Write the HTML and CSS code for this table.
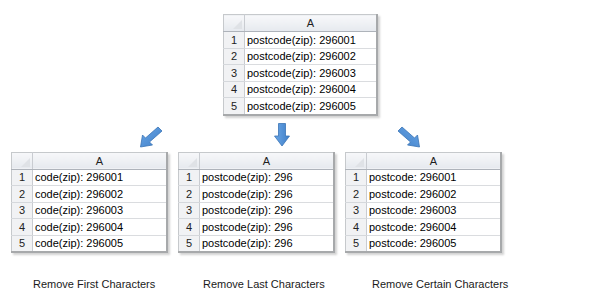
FILE: index.html
```html
<!DOCTYPE html>
<html>
<head>
<meta charset="utf-8">
<link rel="stylesheet" href="styles.css">
</head>
<body>
<div class="page">
  <div class="top-row">
    <table class="sheet">
      <tr><th class="corner"><span class="tri"></span></th><th class="col">A</th></tr>
      <tr><td class="rn">1</td><td>postcode(zip): 296001</td></tr>
      <tr><td class="rn">2</td><td>postcode(zip): 296002</td></tr>
      <tr><td class="rn">3</td><td>postcode(zip): 296003</td></tr>
      <tr><td class="rn">4</td><td>postcode(zip): 296004</td></tr>
      <tr><td class="rn">5</td><td>postcode(zip): 296005</td></tr>
    </table>
  </div>

  <div class="arrows">
    <svg class="arrow a-left" width="24" height="22" viewBox="0 0 24 22">
      <defs>
        <linearGradient id="g1" x1="0" y1="0" x2="1" y2="1">
          <stop offset="0" stop-color="#6aa6e6"/>
          <stop offset="1" stop-color="#3f7fc8"/>
        </linearGradient>
      </defs>
      <path d="M19 1 L23 5 L10.5 16 L13.5 19 L1.5 21 L3.5 9 L6.5 12 Z" fill="url(#g1)" stroke="#3a73b5" stroke-width="0.8" stroke-linejoin="round"/>
    </svg>
    <svg class="arrow a-mid" width="16" height="24" viewBox="0 0 16 24">
      <defs>
        <linearGradient id="g2" x1="0" y1="0" x2="1" y2="0">
          <stop offset="0" stop-color="#6aa6e6"/>
          <stop offset="1" stop-color="#3f7fc8"/>
        </linearGradient>
      </defs>
      <path d="M4.5 0.5 L11.5 0.5 L11.5 13 L15.5 13 L8 23 L0.5 13 L4.5 13 Z" fill="url(#g2)" stroke="#3a73b5" stroke-width="0.8" stroke-linejoin="round"/>
    </svg>
    <svg class="arrow a-right" width="24" height="22" viewBox="0 0 24 22">
      <defs>
        <linearGradient id="g3" x1="1" y1="0" x2="0" y2="1">
          <stop offset="0" stop-color="#6aa6e6"/>
          <stop offset="1" stop-color="#3f7fc8"/>
        </linearGradient>
      </defs>
      <path d="M5 1 L1 5 L13.5 16 L10.5 19 L22.5 21 L20.5 9 L17.5 12 Z" fill="url(#g3)" stroke="#3a73b5" stroke-width="0.8" stroke-linejoin="round"/>
    </svg>
  </div>

  <div class="bottom-row">
    <table class="sheet">
      <tr><th class="corner"><span class="tri"></span></th><th class="col">A</th></tr>
      <tr><td class="rn">1</td><td>code(zip): 296001</td></tr>
      <tr><td class="rn">2</td><td>code(zip): 296002</td></tr>
      <tr><td class="rn">3</td><td>code(zip): 296003</td></tr>
      <tr><td class="rn">4</td><td>code(zip): 296004</td></tr>
      <tr><td class="rn">5</td><td>code(zip): 296005</td></tr>
    </table>
    <table class="sheet">
      <tr><th class="corner"><span class="tri"></span></th><th class="col">A</th></tr>
      <tr><td class="rn">1</td><td>postcode(zip): 296</td></tr>
      <tr><td class="rn">2</td><td>postcode(zip): 296</td></tr>
      <tr><td class="rn">3</td><td>postcode(zip): 296</td></tr>
      <tr><td class="rn">4</td><td>postcode(zip): 296</td></tr>
      <tr><td class="rn">5</td><td>postcode(zip): 296</td></tr>
    </table>
    <table class="sheet">
      <tr><th class="corner"><span class="tri"></span></th><th class="col">A</th></tr>
      <tr><td class="rn">1</td><td>postcode: 296001</td></tr>
      <tr><td class="rn">2</td><td>postcode: 296002</td></tr>
      <tr><td class="rn">3</td><td>postcode: 296003</td></tr>
      <tr><td class="rn">4</td><td>postcode: 296004</td></tr>
      <tr><td class="rn">5</td><td>postcode: 296005</td></tr>
    </table>
  </div>

  <div class="labels">
    <div class="label">Remove First Characters</div>
    <div class="label">Remove Last Characters</div>
    <div class="label">Remove Certain Characters</div>
  </div>
</div>
</body>
</html>
```

FILE: styles.css
```css
html, body {
  margin: 0;
  padding: 0;
  background: #ffffff;
}
.page {
  width: 600px;
  height: 298px;
  overflow: hidden;
  font-family: "Liberation Sans", Arial, sans-serif;
}
.top-row {
  display: flex;
  justify-content: center;
  padding-top: 14px;
  padding-left: 1px;
}
.sheet {
  border-collapse: collapse;
  width: 155px;
  table-layout: fixed;
  border-left: 1px solid #c6c9cc;
  border-top: 1px solid #c6c9cc;
  border-right: 2px solid #a7a9ab;
  border-bottom: 2px solid #a7a9ab;
  box-shadow: 2px 2px 2px rgba(0,0,0,0.18);
  font-size: 11px;
  background: #fff;
}
.sheet th {
  height: 16px;
  padding: 0;
  font-weight: normal;
  color: #1e1e1e;
  background: linear-gradient(#f7f8fa, #e6e9ee);
  border-right: 1px solid #c9ccd1;
  border-bottom: 1px solid #aeb3ba;
  font-size: 11px;
}
.sheet th.corner {
  width: 20px;
  position: relative;
}
.tri {
  position: absolute;
  right: 2px;
  bottom: 2px;
  width: 0;
  height: 0;
  border-left: 9px solid transparent;
  border-bottom: 9px solid #dfe2e6;
}
.sheet td {
  height: 15.5px;
  padding: 0 0 0 2px;
  border-bottom: 1px solid #dadcdf;
  color: #000;
  white-space: nowrap;
  overflow: hidden;
}
.sheet td.rn {
  padding: 0;
  text-align: center;
  color: #222;
  background: #f1f2f4;
  border-right: 1px solid #c9ccd1;
  border-bottom: 1px solid #d5d8dc;
}
.arrows {
  display: flex;
  align-items: flex-start;
  height: 30px;
  padding-left: 139px;
  margin-top: 6px;
}
.a-left {
  margin-top: 4px;
}
.a-mid {
  margin-left: 111px;
  margin-top: 1px;
}
.a-right {
  margin-left: 107px;
  margin-top: 4px;
}
.bottom-row {
  display: flex;
  gap: 10px;
  padding-left: 11px;
}
.bottom-row .sheet {
  width: 157px;
}
.labels {
  display: grid;
  grid-template-columns: 170px 169px 170px;
  padding-left: 33px;
  margin-top: 25px;
  font-size: 11px;
  color: #1a1a1a;
}
```
